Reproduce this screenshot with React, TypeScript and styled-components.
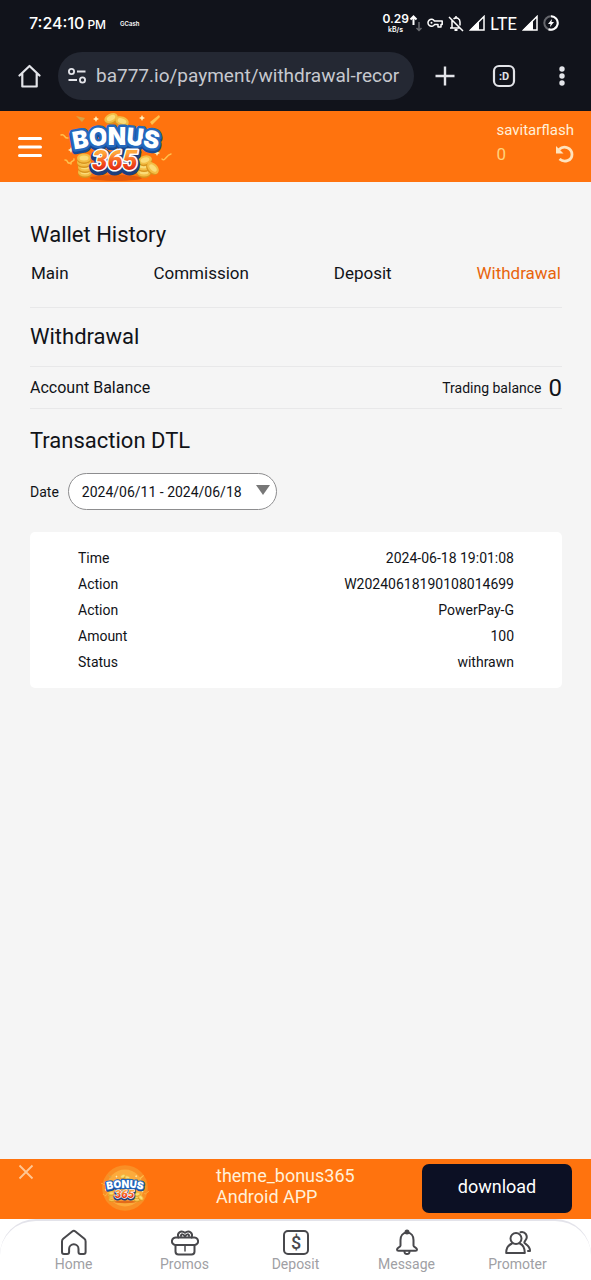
import React from 'react';
import styled, { createGlobalStyle } from 'styled-components';

const GlobalStyle = createGlobalStyle`
  *, *::before, *::after { box-sizing: border-box; }
  body { margin: 0; background: #f5f5f5; color: #111318; font-family: Roboto, "Liberation Sans", sans-serif; }
  button { font: inherit; color: inherit; background: none; border: 0; padding: 0; cursor: pointer; }
  h1, h2, dl, dd, p { margin: 0; font-weight: 400; }
  svg { display: block; flex-shrink: 0; }
`;

const Screen = styled.div`
  min-height: 100vh;
  display: flex;
  flex-direction: column;
`;

const StatusBar = styled.header`
  display: flex;
  align-items: center;
  height: 46px;
  padding: 0 32px 0 29px;
  background: #11131b;
  color: #fff;
  font-family: Inter, Roboto, sans-serif;
`;

const Clock = styled.time`
  font-size: 16px;
  font-weight: 500;
  small { font-size: 12px; margin-left: 3px; }
`;

const Carrier = styled.span`
  margin-left: 14px;
  font-size: 6px;
  font-weight: 600;
`;

const StatusIcons = styled.div`
  display: flex;
  align-items: center;
  gap: 5px;
  margin-left: auto;
`;

const Speed = styled.div`
  display: flex;
  align-items: center;
`;

const SpeedText = styled.div`
  display: flex;
  flex-direction: column;
  align-items: flex-end;
  font-size: 12px;
  line-height: 12px;
  font-weight: 600;
  small { font-size: 7px; line-height: 9px; margin-right: 6px; }
`;

const Network = styled.span`
  font-family: Lato, sans-serif;
  font-size: 17px;
`;

const BrowserBar = styled.div`
  display: flex;
  align-items: center;
  height: 65px;
  padding: 0 19px 6px 18px;
  background: #11131b;
  color: #e3e4e9;
`;

const AddressBar = styled.div`
  flex: 1;
  min-width: 0;
  display: flex;
  align-items: center;
  gap: 9px;
  height: 48px;
  margin: 0 20px 0 17px;
  padding: 0 9px;
  border-radius: 24px;
  background: #242833;
`;

const AddressInput = styled.input`
  flex: 1;
  min-width: 0;
  padding: 0;
  border: 0;
  outline: 0;
  background: transparent;
  color: #c7c9cf;
  font: 19px Roboto, sans-serif;
`;

const BrowserActions = styled.div`
  display: flex;
  align-items: center;
  gap: 36px;
`;

const SiteHeader = styled.header`
  display: flex;
  align-items: center;
  height: 71px;
  padding: 0 17px;
  background: #ff730e;
  color: #fff0d8;
`;

const LogoLink = styled.a`
  margin-left: 15px;
`;

const Account = styled.div`
  display: flex;
  flex-direction: column;
  gap: 2px;
  margin-left: auto;
  padding-bottom: 7px;
  font-size: 15px;
  line-height: 20px;
`;

const Credit = styled.div`
  display: flex;
  align-items: center;
  justify-content: space-between;
  height: 24px;
  font-size: 17px;
  color: #ffd27a;
`;

const Main = styled.main`
  flex: 1;
  padding: 38px 29px 0 30px;
`;

const Title = styled.h1`
  font-size: 22px;
  line-height: 30px;
`;

const Subtitle = styled.h2<{ $tall?: boolean }>`
  font-size: 22px;
  line-height: ${(p) => (p.$tall ? 64 : 58)}px;
`;

const Tabs = styled.nav`
  display: flex;
  justify-content: space-between;
  padding: 11px 1px 22px;
  border-bottom: 1px solid #e8e8e9;
`;

const Tab = styled.a<{ $active?: boolean }>`
  font-size: 17px;
  line-height: 24px;
  text-decoration: none;
  color: ${(p) => (p.$active ? '#e8640c' : 'inherit')};
`;

const BalanceRow = styled.div`
  display: flex;
  align-items: center;
  height: 43px;
  border: solid #e8e8e9;
  border-width: 1px 0;
  font-size: 16px;
`;

const Trading = styled.span`
  display: flex;
  align-items: center;
  gap: 7px;
  margin-left: auto;
  font-size: 14px;
  strong { font-size: 24px; font-weight: 400; }
`;

const DateRow = styled.div`
  display: flex;
  align-items: center;
  gap: 9px;
  margin-bottom: 22px;
  font-size: 14px;
`;

const DateButton = styled.button`
  display: flex;
  align-items: center;
  gap: 14px;
  height: 37px;
  padding: 0 6px 0 13px;
  border: 1px solid #8d8d8f;
  border-radius: 19px;
  background: #fff;
  svg { margin-bottom: 4px; }
`;

const Card = styled.dl`
  padding: 13px 48px;
  border-radius: 5px;
  background: #fff;
  font-size: 14px;
  line-height: 26px;
`;

const Detail = styled.div`
  display: flex;
  justify-content: space-between;
`;

const Promo = styled.aside`
  display: flex;
  align-items: center;
  height: 60px;
  padding: 0 19px 2px 18px;
  background: #ff730e;
  color: #fff0d8;
`;

const CloseButton = styled.button`
  align-self: flex-start;
  margin-top: 5px;
`;

const PromoLogo = styled.div`
  margin-left: 67px;
`;

const PromoText = styled.p`
  flex: 1;
  margin-left: 67px;
  font-size: 18px;
  line-height: 21px;
  padding-bottom: 4px;
`;

const Download = styled.button`
  width: 150px;
  height: 49px;
  padding-bottom: 3px;
  border-radius: 7px;
  background: #0c1024;
  color: #fff;
  font-size: 18px;
`;

const NavBack = styled.div`
  background: #fff;
`;

const BottomNav = styled.nav`
  display: flex;
  justify-content: space-around;
  height: 61px;
  padding: 8px 18px 0;
  border-top: 2px solid #e3e3ea;
  border-radius: 36px 36px 0 0;
  background: #fff;
`;

const NavItem = styled.a`
  flex: 1;
  display: flex;
  flex-direction: column;
  align-items: center;
  font-size: 14px;
  line-height: 16px;
  text-decoration: none;
  color: #a0a0a4;
  svg { color: #48484c; }
`;

const Coin = ({ x, y, r = 0 }: { x: number; y: number; r?: number }) => (
  <g transform={`translate(${x} ${y}) rotate(${r})`}>
    <ellipse rx="7" ry="4.500" cy="1.500" fill="#d8951f" />
    <ellipse rx="7" ry="4.500" fill="#f3bd45" />
    <ellipse rx="4.500" ry="2.500" fill="#fbdc78" />
  </g>
);

const letters: [string, number, number, number][] = [
  ['B', 24, 36, -10],
  ['O', 41, 33.5, -5],
  ['N', 59, 32.5, 0],
  ['U', 76.5, 33.5, 5],
  ['S', 92, 36, 10],
];

function LogoArt({ id }: { id: string }) {
  return (
    <>
      <defs>
        <linearGradient id={id} x1="0" y1="0" x2="0" y2="1">
          <stop offset="0.25" stopColor="#ffa63c" />
          <stop offset="0.55" stopColor="#f4501c" />
          <stop offset="0.85" stopColor="#d91f12" />
        </linearGradient>
      </defs>
      <ellipse cx="58" cy="66" rx="26" ry="3" fill="#d9500a" opacity="0.7" />
      <g fill="none" stroke="#ffc04d" strokeWidth="1.500" strokeLinecap="round">
        <path d="M3 23c4-2 3 4 7 3M7 48c4 0 1 4 5 3M13 52c-1-4 4-2 3-5M104 47c3 3 4-4 9-5" />
      </g>
      <path d="M18 4l9 2-3 4z" fill="#dba344" />
      <path d="M92 10l9-7 1 2-8 8z" fill="#ffc04d" />
      <g fill="#fff0bd">
        <path d="M38 4l1 2 2 1-2 1-1 2-1-2-2-1 2-1z" />
        <path d="M84 3l1 2 2 1-2 1-1 2-1-2-2-1 2-1z" />
        <path d="M99 38l1 2 2 1-2 1-1 2-1-2-2-1 2-1z" />
        <path d="M13 35l1 2 2 1-2 1-1 2-1-2-2-1 2-1z" />
      </g>
      <Coin x={53} y={6} r={-25} />
      <Coin x={64} y={9} r={20} />
      <Coin x={27} y={60} />
      <Coin x={27} y={55} />
      <Coin x={26} y={50} />
      <Coin x={26} y={46} />
      <Coin x={86} y={60} />
      <Coin x={86} y={54} />
      <Coin x={87} y={48} r={-15} />
      <Coin x={95} y={56} r={45} />
      <g fontFamily="Inter, Roboto, sans-serif" fontWeight="900" textAnchor="middle" strokeLinejoin="round">
        <g fontSize="24">
          {letters.map(([c, x, y, r]) => (
            <text key={c} transform={`translate(${x} ${y + 2}) rotate(${r})`} fill="#174a94" stroke="#174a94" strokeWidth="6" aria-hidden="true">{c}</text>
          ))}
          {letters.map(([c, x, y, r]) => (
            <text key={c} transform={`translate(${x} ${y}) rotate(${r})`} fill="#fff" stroke="#2468bd" strokeWidth="5" paintOrder="stroke">{c}</text>
          ))}
        </g>
        <g fontSize="27" fontFamily="Roboto, sans-serif" fontStyle="italic">
          <text x="57" y="60" fill="#1d3f7d" stroke="#1d3f7d" strokeWidth="7" aria-hidden="true">365</text>
          <text x="57" y="58" fill={`url(#${id})`} stroke="#fff" strokeWidth="3" paintOrder="stroke">365</text>
        </g>
      </g>
    </>
  );
}

const line = { fill: 'none', stroke: 'currentColor', strokeWidth: 2, strokeLinejoin: 'round', strokeLinecap: 'round' } as const;

const details = [
  ['Time', '2024-06-18 19:01:08'],
  ['Action', 'W20240618190108014699'],
  ['Action', 'PowerPay-G'],
  ['Amount', '100'],
  ['Status', 'withrawn'],
];

const navItems = [
  {
    label: 'Home',
    icon: <path d="M2 12.5c0-1 .4-2 1.200-2.700L12.200 2.500a2.500 2.500 0 0 1 3.200 0l9 7.300c.8.700 1.200 1.700 1.200 2.700v10.500a2 2 0 0 1-2 2h-3.100a2 2 0 0 1-2-2v-3a4.700 4.700 0 0 0-9.400 0v3a2 2 0 0 1-2 2H4a2 2 0 0 1-2-2z" />,
  },
  {
    label: 'Promos',
    icon: (
      <>
        <path d="M5.500 8.500h17a3.500 3.500 0 0 1 1.500 7.500H4a3.500 3.500 0 0 1 1.500-7.500zM4.500 16v6.500a3 3 0 0 0 3 3h13a3 3 0 0 0 3-3V16" />
        <path d="M7.500 8.500C5.500 4 10 .5 14 3.800 18 .5 22.500 4 20.500 8.500M10 7c0-2.500 2.500-2 4 .5C15.500 5 18 4.500 18 7" />
        <path d="M14 17v5" strokeWidth="1.500" />
      </>
    ),
  },
  {
    label: 'Deposit',
    icon: (
      <>
        <rect x="2" y="2" width="24" height="23" rx="4" />
        <text x="14" y="20" textAnchor="middle" fontSize="18" fontWeight="500" fill="currentColor" stroke="none">$</text>
      </>
    ),
  },
  {
    label: 'Message',
    icon: (
      <>
        <path d="M14 3.500c-4.300 0-6.500 3.500-6.500 7.500v5.500c0 1.700-3.500 2.200-3.500 4 0 .8.600 1.300 1.500 1.300h17c.9 0 1.500-.5 1.500-1.300 0-1.800-3.500-2.300-3.500-4V11c0-4-2.200-7.500-6.500-7.500zM11.500 23c.3 2.800 4.700 2.800 5 0" />
        <circle cx="14" cy="3" r="1.500" fill="currentColor" />
      </>
    ),
  },
  {
    label: 'Promoter',
    icon: (
      <>
        <circle cx="12" cy="9.500" r="5.500" />
        <path d="M8 14.500c-3.800 1.500-5.800 5-5.800 9.500h18.600c0-4.500-1.500-8-5-9.500M16.500 3.200c5-1.200 7.500 4 5.500 7.300-1 1.700-2.200 2.500-1.500 3.500 1 1.400 5.500 2.500 5.500 8h-2" />
      </>
    ),
  },
];

const Signal = ({ fillFrom }: { fillFrom: number }) => (
  <svg width="16" height="16" viewBox="0 0 16 16">
    <path d="M15 1.500v13.500H1.500z" fill="none" stroke="#fff" strokeWidth="1.500" />
    <path d={`M1 15L${fillFrom} ${16 - fillFrom}V15z`} fill="#fff" />
  </svg>
);

export default function App() {
  return (
    <Screen>
      <GlobalStyle />
      <StatusBar>
        <Clock>7:24:10<small>PM</small></Clock>
        <Carrier>GCash</Carrier>
        <StatusIcons>
          <Speed>
            <SpeedText>0.29<small>kB/s</small></SpeedText>
            <svg width="13" height="20" viewBox="0 0 13 20" fill="none" strokeWidth="2">
              <path d="M4.500 12V4M1.500 6.500l3-3 3 3" stroke="#fff" />
              <path d="M10 9v8M7.500 15l2.500 2.500 2.500-2.500" stroke="#6a6b70" strokeWidth="1.500" />
            </svg>
          </Speed>
          <svg width="16" height="12" viewBox="0 0 16 12" fill="none" stroke="#fff" strokeWidth="1.500">
            <path d="M7.500 4h7.700v3.500H14V10h-3V7.500H7.500A3.500 3.500 0 1 1 7.500 4z" strokeLinejoin="round" />
            <circle cx="4.500" cy="5.800" r="1" fill="#fff" stroke="none" />
          </svg>
          <svg width="16" height="17" viewBox="0 0 16 17" fill="none" stroke="#fff" strokeWidth="1.500">
            <path d="M1 2l14 14M4 5.500V13M2 13h10M5.500 3.800C9 1.500 12 4 12 7v3.500M8 1v2" />
            <path d="M6.500 15h3" strokeWidth="2" />
          </svg>
          <Signal fillFrom={10} />
          <Network>LTE</Network>
          <Signal fillFrom={11} />
          <svg width="16" height="16" viewBox="0 0 16 16" fill="none" strokeWidth="2">
            <circle cx="8" cy="8" r="6.700" stroke="#66676d" />
            <path d="M8 1.300A6.700 6.700 0 1 1 5.500 14.200" stroke="#fff" />
            <path d="M9 4L5 9h2.500L7 12l4-5H8.500z" fill="#fff" />
          </svg>
        </StatusIcons>
      </StatusBar>
      <BrowserBar>
        <button aria-label="Home page">
          <svg width="23" height="24" viewBox="0 0 23 24" fill="none" stroke="currentColor" strokeWidth="2.200">
            <path d="M1.500 11.500L11.500 2l10 9.500M4.300 9.500v13h14.400v-13" strokeLinejoin="round" strokeLinecap="round" />
          </svg>
        </button>
        <AddressBar>
          <svg width="20" height="18" viewBox="0 0 20 18" fill="none" stroke="currentColor" strokeWidth="1.800">
            <circle cx="4.500" cy="4.500" r="2.600" />
            <path d="M10 4.500h8.500M1.500 13h8.500" />
            <circle cx="15.500" cy="13" r="2.600" />
          </svg>
          <AddressInput aria-label="Address" readOnly value="ba777.io/payment/withdrawal-recor" />
        </AddressBar>
        <BrowserActions>
          <button aria-label="New tab">
            <svg width="22" height="22" viewBox="0 0 22 22" stroke="currentColor" strokeWidth="2.400">
              <path d="M11 1.500v19M1.500 11h19" />
            </svg>
          </button>
          <button aria-label="Open tabs">
            <svg width="24" height="24" viewBox="0 0 24 24" fill="none" stroke="currentColor" strokeWidth="2.200">
              <rect x="2" y="2" width="20" height="20" rx="5" />
              <text x="12" y="16" textAnchor="middle" fontSize="11" fontWeight="700" fill="currentColor" stroke="none">:D</text>
            </svg>
          </button>
          <button aria-label="Menu">
            <svg width="20" height="22" viewBox="0 0 20 22" fill="currentColor">
              <circle cx="10" cy="4" r="2.700" /><circle cx="10" cy="11" r="2.700" /><circle cx="10" cy="18" r="2.700" />
            </svg>
          </button>
        </BrowserActions>
      </BrowserBar>

      <SiteHeader>
        <button aria-label="Open menu">
          <svg width="26" height="22" viewBox="0 0 26 22" stroke="#fff" strokeWidth="3" strokeLinecap="round">
            <path d="M2.500 2.500h21M2.500 11h21M2.500 19.500h21" />
          </svg>
        </button>
        <LogoLink href="#" aria-label="Bonus 365">
          <svg width="118" height="70" viewBox="0 0 118 70"><LogoArt id="header-digits" /></svg>
        </LogoLink>
        <Account>
          <span>savitarflash</span>
          <Credit>
            0
            <button aria-label="Refresh balance">
              <svg width="18" height="18" viewBox="0 0 18 18" fill="none" stroke="#ffe3bd" strokeWidth="2.800">
                <path d="M3 4.500C8 -.500 16 3 16 9.500c0 6.500-8 8.500-12.500 4.500" />
                <path d="M0 1v7.500h7.500z" fill="#ffe3bd" stroke="none" />
              </svg>
            </button>
          </Credit>
        </Account>
      </SiteHeader>

      <Main>
        <Title>Wallet History</Title>
        <Tabs>
          <Tab href="#main">Main</Tab>
          <Tab href="#commission">Commission</Tab>
          <Tab href="#deposit">Deposit</Tab>
          <Tab href="#withdrawal" $active aria-current="page">Withdrawal</Tab>
        </Tabs>
        <Subtitle>Withdrawal</Subtitle>
        <BalanceRow>
          Account Balance
          <Trading>Trading balance <strong>0</strong></Trading>
        </BalanceRow>
        <Subtitle $tall>Transaction DTL</Subtitle>
        <DateRow>
          <label htmlFor="date-range">Date</label>
          <DateButton id="date-range">
            2024/06/11 - 2024/06/18
            <svg width="14" height="10" viewBox="0 0 14 10"><path d="M0 0h14L7 10z" fill="#777" /></svg>
          </DateButton>
        </DateRow>
        <Card>
          {details.map(([term, value]) => (
            <Detail key={value}>
              <dt>{term}</dt>
              <dd>{value}</dd>
            </Detail>
          ))}
        </Card>
      </Main>

      <Promo>
        <CloseButton aria-label="Close">
          <svg width="16" height="16" viewBox="0 0 16 16" stroke="#ffc794" strokeWidth="1.800">
            <path d="M1.500 1.500l13 13M14.500 1.500l-13 13" />
          </svg>
        </CloseButton>
        <PromoLogo>
          <svg width="48" height="48" viewBox="0 0 120 120">
            <circle cx="60" cy="60" r="57" fill="#f98f25" />
            <circle cx="60" cy="60" r="46" fill="#fcab3c" />
            <g transform="translate(-2 24) scale(1.070)"><LogoArt id="promo-digits" /></g>
          </svg>
        </PromoLogo>
        <PromoText>theme_bonus365<br />Android APP</PromoText>
        <Download>download</Download>
      </Promo>
      <NavBack>
        <BottomNav>
          {navItems.map(({ label, icon }) => (
            <NavItem key={label} href={`#${label.toLowerCase()}`}>
              <svg width="28" height="27" viewBox="0 0 28 27" {...line}>{icon}</svg>
              {label}
            </NavItem>
          ))}
        </BottomNav>
      </NavBack>
    </Screen>
  );
}
